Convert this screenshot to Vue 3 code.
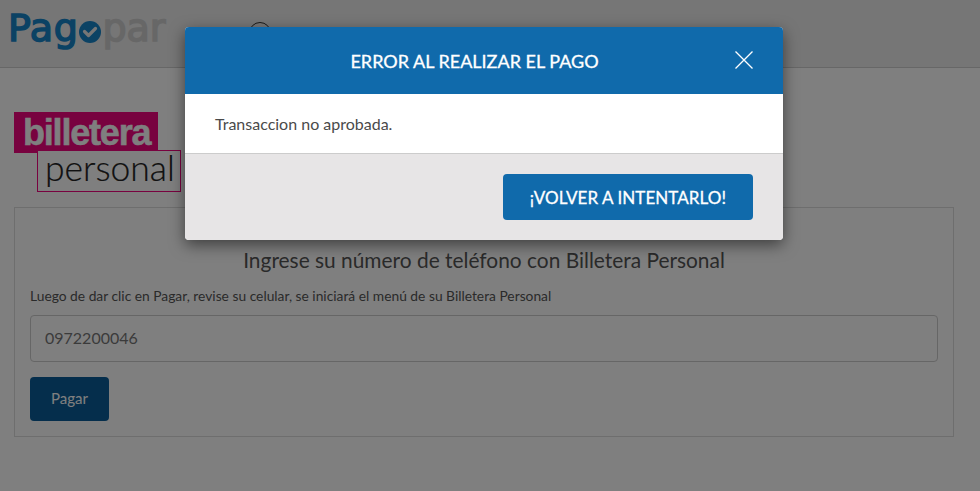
<script setup>
const phone = '0972200046'
</script>

<template>
  <div class="page">
    <header class="topbar">
      <div class="logo">
        <span class="logo-pag">Pag</span>
        <svg class="logo-check" width="22" height="22" viewBox="0 0 22 22">
          <circle cx="11" cy="11" r="11" fill="#1784c8" />
          <path d="M5.5 10.5l4 4 7-7" fill="none" stroke="#ececec" stroke-width="3.2" stroke-linecap="round" stroke-linejoin="round" />
        </svg>
        <span class="logo-par">par</span>
      </div>
      <div class="help">
        <span class="help-icon">?</span>
        <span class="help-label">Ayuda</span>
      </div>
    </header>

    <main class="content">
      <div class="brand">
        <div class="brand-top">billetera</div>
        <div class="brand-bottom">personal</div>
      </div>
      <section class="panel">
        <h2 class="panel-title">Ingrese su número de teléfono con Billetera Personal</h2>
        <p class="panel-note">Luego de dar clic en Pagar, revise su celular, se iniciará el menú de su Billetera Personal</p>
        <input class="phone" :value="phone" readonly />
        <button class="pay" type="button">Pagar</button>
      </section>
    </main>

    <div class="overlay">
      <div class="modal">
        <div class="modal-head">
          <h1 class="modal-title">ERROR AL REALIZAR EL PAGO</h1>
          <svg class="close" width="18" height="18" viewBox="0 0 18 18">
            <path d="M0.5 0.5L17.5 17.5M17.5 0.5L0.5 17.5" stroke="#fff" stroke-width="1.3" fill="none" />
          </svg>
        </div>
        <div class="modal-body">Transaccion no aprobada.</div>
        <div class="modal-foot">
          <button class="retry" type="button">¡VOLVER A INTENTARLO!</button>
        </div>
      </div>
    </div>
  </div>
</template>

<style>
html, body { margin: 0; background: #fff; overflow: hidden; }
</style>

<style scoped>
* { box-sizing: border-box; }
.page {
  position: relative;
  width: 980px;
  height: 491px;
  overflow: hidden;
  background: #fff;
  font-family: Lato, "Liberation Sans", sans-serif;
  color: #555;
}
.topbar {
  height: 68px;
  background: #ececec;
  border-bottom: 1px solid #cfcfcf;
  display: flex;
  align-items: flex-start;
  padding: 5px 0 0 8px;
}
.logo {
  display: flex;
  align-items: flex-start;
  width: 241px;
  font-family: "DejaVu Sans", sans-serif;
  font-size: 38px;
  line-height: 46px;
  letter-spacing: 0.6px;
  -webkit-text-stroke: 1.6px currentColor;
}
.logo-pag { color: #1784c8; }
.logo-par { color: #cfcfcf; margin-left: 1px; letter-spacing: 0; }
.logo-check { margin: 16px 0 0 1px; flex: none; }
.help {
  display: flex;
  gap: 7px;
  padding-top: 17px;
  font-size: 15px;
  line-height: 22px;
}
.help-icon {
  display: block;
  width: 22px;
  height: 22px;
  border: 1px solid #333;
  border-radius: 50%;
  font-size: 14px;
  line-height: 20px;
  text-align: center;
}
.content { padding: 44px 26px 0 14px; }
.brand {
  width: 167px;
  height: 80px;
  display: flex;
  flex-direction: column;
}
.brand-top {
  width: 144px;
  height: 41px;
  background: #f0047f;
  color: #fff;
  font-family: "Liberation Sans", Arial, sans-serif;
  font-weight: 700;
  font-size: 36px;
  line-height: 41px;
  letter-spacing: -1.2px;
  padding-left: 9px;
  white-space: nowrap;
  -webkit-text-stroke: 0.5px #fff;
}
.brand-bottom {
  align-self: flex-end;
  width: 144px;
  height: 42px;
  margin-top: -3px;
  background: #fff;
  border: 1px solid #f0047f;
  color: #222;
  font-family: Lato, sans-serif;
  font-weight: 300;
  font-size: 35.5px;
  line-height: 33px;
  padding-left: 7px;
  white-space: nowrap;
  -webkit-text-stroke: 0.2px #222;
}
.panel {
  margin-top: 15px;
  height: 230px;
  border: 1px solid #ddd;
  padding: 38px 15px 0;
}
.panel-title {
  margin: 0;
  font-size: 20.9px;
  font-weight: 400;
  line-height: 28px;
  text-align: center;
}
.panel-note {
  margin: 12px 0 0;
  font-size: 13.8px;
  line-height: 20px;
}
.phone {
  display: block;
  width: 100%;
  height: 47px;
  margin-top: 9px;
  padding: 0 14px 2px;
  border: 1px solid #ccc;
  border-radius: 4px;
  background: #fff;
  color: #777;
  font-family: inherit;
  font-size: 16px;
  outline: none;
}
.pay {
  display: block;
  width: 79px;
  height: 44px;
  margin-top: 15px;
  padding: 0 0 2px;
  border: 0;
  border-radius: 4px;
  background: #0a5d99;
  color: #fff;
  font-family: inherit;
  font-size: 15px;
}
.overlay {
  position: absolute;
  inset: 0;
  background: rgba(0, 0, 0, 0.5);
  display: flex;
  justify-content: center;
  align-items: flex-start;
  padding: 27px 0 0 0;
}
.modal {
  width: 598px;
  height: 213px;
  margin-left: -12px;
  border-radius: 4px;
  overflow: hidden;
  background: #fff;
  box-shadow: 0 5px 15px rgba(0, 0, 0, 0.5);
  display: flex;
  flex-direction: column;
}
.modal-head {
  position: relative;
  height: 67px;
  flex: none;
  background: #106aab;
  display: flex;
  align-items: center;
  justify-content: center;
  padding-right: 19px;
}
.modal-title {
  margin: 0;
  color: #fff;
  font-size: 18px;
  font-weight: 400;
  -webkit-text-stroke: 0.3px #fff;
}
.close {
  position: absolute;
  left: 550px;
  top: 24px;
}
.modal-body {
  height: 60px;
  flex: none;
  padding: 20px 30px 0;
  border-bottom: 1px solid #ccc;
  font-size: 16px;
  line-height: 20px;
  color: #4a4a4a;
}
.modal-foot {
  flex: 1;
  background: #e7e5e6;
  display: flex;
  justify-content: flex-end;
  align-items: flex-start;
  padding: 20px 30px 0 0;
}
.retry {
  width: 250px;
  height: 46px;
  border: 0;
  border-radius: 4px;
  background: #106aab;
  color: #fff;
  font-family: inherit;
  font-size: 17px;
  font-weight: 400;
  letter-spacing: 0.07px;
  -webkit-text-stroke: 0.3px #fff;
  padding: 0;
}
</style>
